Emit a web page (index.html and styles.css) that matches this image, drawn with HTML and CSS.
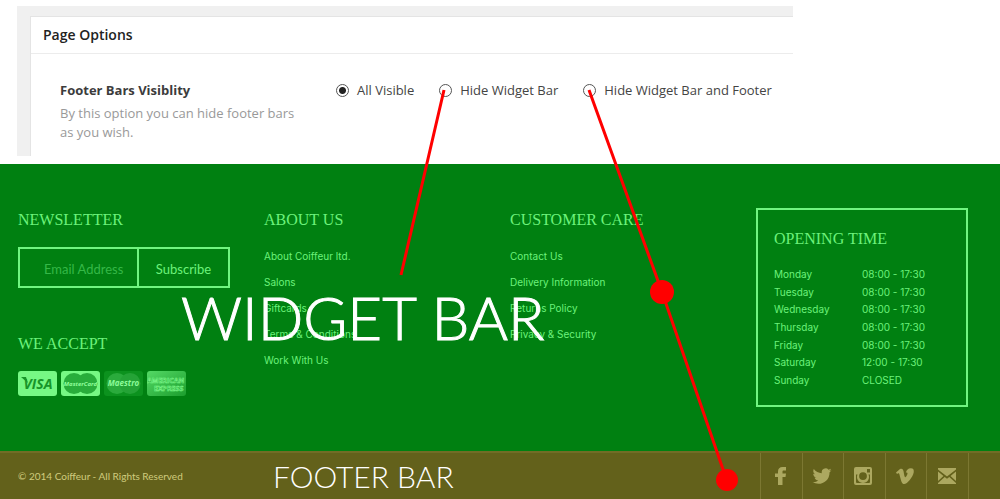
FILE: index.html
```
<!DOCTYPE html>
<html lang="en">
<head>
<meta charset="utf-8">
<title>Footer Bars Visibility</title>
<link rel="stylesheet" href="styles.css">
</head>
<body>
<main class="options">
  <section class="card">
    <h1 class="card-title">Page Options</h1>
    <div class="option-row">
      <div class="option-info">
        <h2 class="option-name" id="opt">Footer Bars Visiblity</h2>
        <p class="option-text">By this option you can hide footer bars as you wish.</p>
      </div>
      <div class="choices" role="radiogroup" aria-labelledby="opt">
        <label class="choice"><input type="radio" name="bars" checked>All Visible</label>
        <label class="choice"><input type="radio" name="bars">Hide Widget Bar</label>
        <label class="choice"><input type="radio" name="bars">Hide Widget Bar and Footer</label>
      </div>
    </div>
  </section>
</main>
<footer>
  <div class="widgets">
    <section>
      <h3 class="heading">NEWSLETTER</h3>
      <form class="newsletter">
        <input class="email" type="email" placeholder="Email Address" aria-label="Email Address">
        <button class="subscribe" type="button">Subscribe</button>
      </form>
      <h3 class="heading">WE ACCEPT</h3>
      <div class="cards">
        <svg class="pay" viewBox="0 0 39 25" role="img" aria-label="Visa"><rect width="39" height="25" rx="3" fill="#76f884"/><path d="M3 6h5l2 6z" fill="#179529"/><text x="20" y="18" font-size="14" font-weight="700" font-style="italic" text-anchor="middle" fill="#179529">VISA</text></svg>
        <svg class="pay" viewBox="0 0 39 25" role="img" aria-label="MasterCard"><rect width="39" height="25" rx="3" fill="#76f884"/><circle cx="13" cy="12.500" r="10.500" fill="#28ad3b"/><circle cx="26" cy="12.500" r="10.500" fill="#28ad3b"/><text x="19.500" y="15" font-size="6" font-weight="700" font-style="italic" text-anchor="middle" fill="#90ff9c">MasterCard</text></svg>
        <svg class="pay" viewBox="0 0 39 25" role="img" aria-label="Maestro"><rect width="39" height="25" rx="3" fill="#0c921e"/><circle cx="13" cy="12.500" r="10.500" fill="#2aab3c"/><circle cx="26" cy="12.500" r="10.500" fill="#24a336"/><text x="19.500" y="15" font-size="8" font-weight="700" font-style="italic" text-anchor="middle" fill="#8cfb99">Maestro</text></svg>
        <svg class="pay" viewBox="0 0 39 25" role="img" aria-label="American Express"><defs><linearGradient id="amex" x2="1" y2="1"><stop stop-color="#54d965"/><stop offset="1" stop-color="#1c9e2e"/></linearGradient></defs><rect width="39" height="25" rx="3" fill="url(#amex)"/><g font-size="7" font-weight="700" fill="#18962a" stroke="#7dfa8b" stroke-width=".6"><text x="0" y="12">AMERICAN</text><text x="7" y="20">EXPRESS</text></g></svg>
      </div>
    </section>
    <section>
      <h3 class="heading">ABOUT US</h3>
      <ul class="links">
        <li><a href="#">About Coiffeur ltd.</a></li>
        <li><a href="#">Salons</a></li>
        <li><a href="#">Giftcards</a></li>
        <li><a href="#">Terms &amp; Conditions</a></li>
        <li><a href="#">Work With Us</a></li>
      </ul>
    </section>
    <section>
      <h3 class="heading">CUSTOMER CARE</h3>
      <ul class="links">
        <li><a href="#">Contact Us</a></li>
        <li><a href="#">Delivery Information</a></li>
        <li><a href="#">Returns Policy</a></li>
        <li><a href="#">Privacy &amp; Security</a></li>
      </ul>
    </section>
    <section class="opening">
      <h3 class="heading">OPENING TIME</h3>
      <table class="hours">
        <tr><th scope="row">Monday</th><td>08:00 - 17:30</td></tr>
        <tr><th scope="row">Tuesday</th><td>08:00 - 17:30</td></tr>
        <tr><th scope="row">Wednesday</th><td>08:00 - 17:30</td></tr>
        <tr><th scope="row">Thursday</th><td>08:00 - 17:30</td></tr>
        <tr><th scope="row">Friday</th><td>08:00 - 17:30</td></tr>
        <tr><th scope="row">Saturday</th><td>12:00 - 17:30</td></tr>
        <tr><th scope="row">Sunday</th><td>CLOSED</td></tr>
      </table>
    </section>
  </div>
  <div class="bottom">
    <p class="copyright">© 2014 Coiffeur - All Rights Reserved</p>
    <nav class="social" aria-label="Social links">
      <a href="#" aria-label="Facebook"><svg viewBox="0 0 20 20"><path d="M8 19V11H5V7.500h3V5.500C8 2.500 9.700 1 12.500 1H16v3.500h-2.200c-1 0-1.300.5-1.300 1.300v1.700H16L15.500 11h-3v8z"/></svg></a>
      <a href="#" aria-label="Twitter"><svg viewBox="0 0 20 20"><path d="M19.500 4.200c-.7.300-1.400.5-2.200.6.800-.5 1.400-1.200 1.700-2.100-.8.500-1.600.8-2.500 1A3.900 3.900 0 0 0 9.800 7.200C6.600 7.100 3.700 5.500 1.800 3.100c-1 1.800-.5 4 1.200 5.200-.6 0-1.200-.2-1.800-.5 0 1.900 1.300 3.500 3.200 3.900-.6.200-1.200.2-1.800.1.500 1.600 2 2.700 3.700 2.700A8 8 0 0 1 .5 16.100C7.500 20.400 17.600 16.200 17.600 6.200c.8-.6 1.400-1.200 1.900-2z"/></svg></a>
      <a href="#" aria-label="Instagram"><svg viewBox="0 0 20 20"><path fill-rule="evenodd" d="M3 1h14q2 0 2 2v14q0 2-2 2H3q-2 0-2-2V3q0-2 2-2zM14 3v3.500h3V3zM3 8.500V16q0 1 1 1h12q1 0 1-1V8.500h-1.500A6 6 0 1 1 4.500 8.500zM10 6.200a3.900 3.900 0 1 0 0 7.800 3.900 3.900 0 0 0 0-7.800z"/></svg></a>
      <a href="#" aria-label="Vimeo"><svg viewBox="0 0 20 20"><path d="M1 6.500 5 3C7 2 8.200 3.200 8.600 5.500c.5 3 .9 5.800 1.700 5.800.6 0 2.200-2.700 2.200-3.800 0-1-.7-1.200-1.700-.8C11.600 4 13.200 2.400 15.700 2.300c2.500-.1 3.500 1.500 3 4.100C17.900 10.700 12.300 18 9.200 18c-2.500 0-3-3-4.700-9.300C4.200 7.500 3.800 6.700 2 7.900z"/></svg></a>
      <a href="#" aria-label="Email"><svg viewBox="0 0 20 20"><path d="M1 2h18v1.500l-9 7-9-7zM1 5.500 6.500 10 1 15zM19 5.500 13.500 10 19 15zM7.700 11l2.300 1.800 2.300-1.800L19 17v1H1v-1z"/></svg></a>
    </nav>
  </div>
</footer>
<div class="notes">
  <svg class="pointers" viewBox="0 0 1000 499" aria-hidden="true"><path d="M444 90 401 275M589 90 662 292 727 481" fill="none" stroke="red" stroke-width="3"/><circle cx="662" cy="292" r="12" fill="red"/><circle cx="727" cy="480" r="11" fill="red"/></svg>
  <strong class="note note-widget">WIDGET BAR</strong>
  <strong class="note note-footer">FOOTER BAR</strong>
</div>
</body>
</html>
```
FILE: styles.css
```
* { box-sizing: border-box; }

body {
  margin: 0;
  position: relative;
  background: #fff;
  font-family: "Open Sans", sans-serif;
}

h1, h2, h3, p, ul { margin: 0; padding: 0; }
ul { list-style: none; }
a { color: inherit; text-decoration: none; }

.options {
  margin: 6px 207px 8px 17px;
  padding: 10px 0 0 13px;
  background: #f0f0f0;
}

.card {
  background: #fff;
  border: solid #e4e4e4;
  border-width: 1px 0 0 1px;
}

.card-title {
  padding: 8px 12px;
  border-bottom: 1px solid #ececec;
  color: #222;
  font-size: 14px;
  font-weight: 600;
  line-height: 20px;
}

.option-row {
  display: flex;
  gap: 32px;
  padding: 27px 20px 14px 29px;
  font-size: 13px;
  line-height: 19px;
}

.option-info { flex: 0 0 244px; }

.option-name {
  margin-bottom: 4px;
  color: #3c3c3c;
  font-size: 13px;
  font-weight: 700;
}

.option-text { color: #999; }

.choices {
  display: flex;
  align-items: flex-start;
  gap: 25px;
  color: #444;
  white-space: nowrap;
}

.choice { display: flex; align-items: center; gap: 8px; }

.choice input {
  appearance: none;
  width: 13px;
  height: 13px;
  margin: 0;
  border: 1px solid #555;
  border-radius: 50%;
  background: #fff;
}

.choice input:checked { background: radial-gradient(circle, #222 3px, #fff 4px); }

.widgets {
  display: grid;
  grid-template-columns: repeat(4, minmax(0, 1fr));
  gap: 34px;
  align-items: start;
  padding: 44px 32px 44px 18px;
  background: #008011;
  color: #6cf27b;
  font: 400 10px/26px Inter, sans-serif;
}

.heading {
  font: 400 16px/24px "Liberation Serif", serif;
}

.newsletter {
  display: flex;
  margin: 15px 0 44px;
  border: 2px solid #70f580;
}

.email, .subscribe {
  height: 37px;
  border: 0;
  border-radius: 0;
  background: none;
  color: inherit;
  font: 400 13px/20px Lato, sans-serif;
}

.email {
  flex: 1;
  min-width: 0;
  padding: 2px 0 0 24px;
}

.email::placeholder { color: #35b847; opacity: 1; }

.subscribe {
  flex: 0 0 91px;
  padding: 2px 0 0;
  border-left: 2px solid #70f580;
}

.cards {
  display: flex;
  gap: 4px;
  margin-top: 15px;
  font-family: "Open Sans", sans-serif;
}

.pay { width: 39px; height: 25px; }

.links { margin-top: 11px; }

.opening {
  padding: 17px 16px 16px;
  border: 2px solid #70f580;
}

.hours {
  height: 123px;
  margin-top: 15px;
  border-collapse: collapse;
  line-height: 17px;
  white-space: nowrap;
}

.hours th, .hours td { padding: 0; font-weight: 400; text-align: left; }
.hours th { width: 88px; }

.bottom {
  display: flex;
  align-items: center;
  justify-content: space-between;
  padding: 0 31px 0 18px;
  border-top: 2px solid #716d26;
  background: #63611b;
}

.copyright {
  color: #d0cc7e;
  font: 400 10px/20px Lato, sans-serif;
}

.social {
  display: flex;
  width: 209px;
  border-right: 1px solid #7c7832;
}

.social a {
  display: flex;
  flex: 1;
  align-items: center;
  justify-content: center;
  height: 46px;
  padding-right: 2px;
  border-left: 1px solid #7c7832;
}

.social svg { width: 20px; height: 20px; fill: #aca860; }

.notes {
  position: absolute;
  inset: 0;
  pointer-events: none;
}

.pointers {
  position: absolute;
  top: 0;
  left: 0;
  width: 1000px;
  height: 499px;
}

.note {
  position: absolute;
  color: #fff;
  font-family: Lato, sans-serif;
  font-weight: 300;
  white-space: nowrap;
}

.note-widget {
  top: 281px;
  left: 181px;
  font-size: 60px;
  line-height: 72px;
  -webkit-text-stroke: 1px #fff;
}

.note-footer { top: 458px; left: 273px; font-size: 30px; line-height: 36px; }
```
